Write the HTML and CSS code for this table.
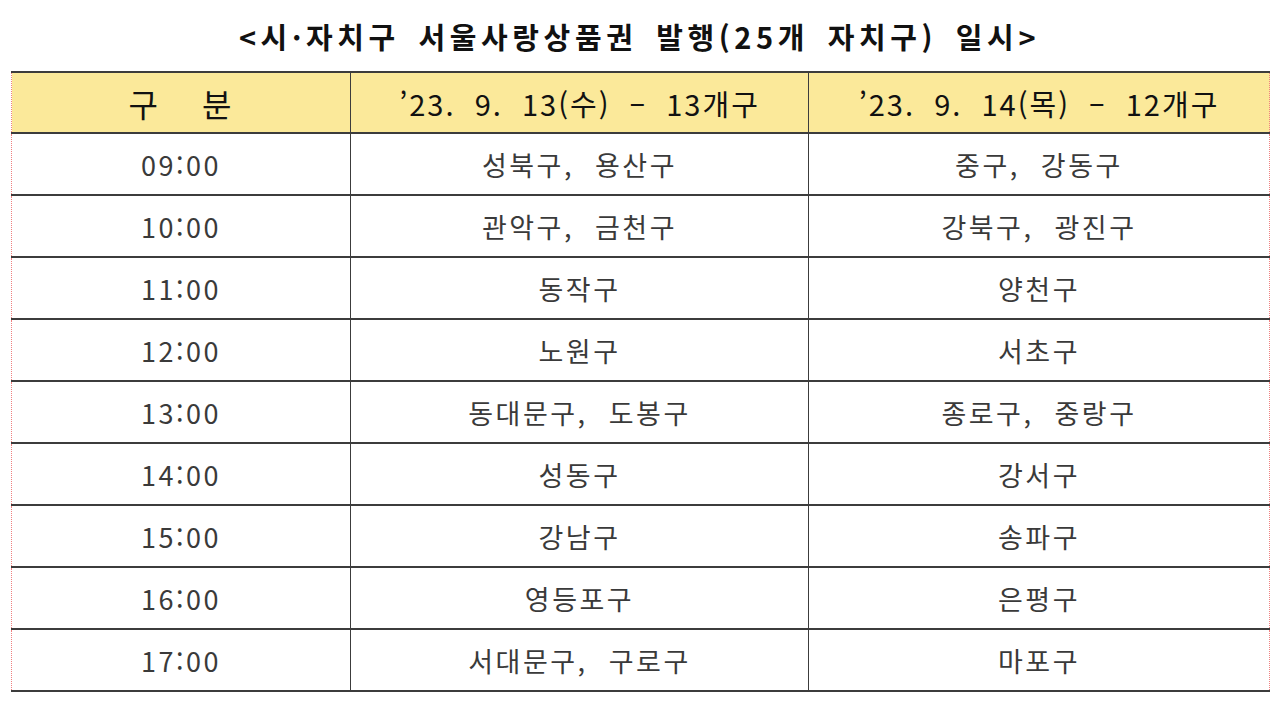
FILE: index.html
```html
<!DOCTYPE html>
<html lang="ko">
<head>
<meta charset="utf-8">
<link rel="stylesheet" href="styles.css">
</head>
<body>
<div class="page">
  <h1 class="title">&lt;시·자치구 서울사랑상품권 발행(25개 자치구) 일시&gt;</h1>
  <table class="sched">
    <colgroup>
      <col class="c1"><col class="c2"><col class="c3">
    </colgroup>
    <thead>
      <tr>
        <th class="gubun">구&nbsp;&nbsp;&nbsp;분</th>
        <th>’23. 9. 13(수) – 13개구</th>
        <th>’23. 9. 14(목) – 12개구</th>
      </tr>
    </thead>
    <tbody>
      <tr><td>09:00</td><td>성북구, 용산구</td><td>중구, 강동구</td></tr>
      <tr><td>10:00</td><td>관악구, 금천구</td><td>강북구, 광진구</td></tr>
      <tr><td>11:00</td><td>동작구</td><td>양천구</td></tr>
      <tr><td>12:00</td><td>노원구</td><td>서초구</td></tr>
      <tr><td>13:00</td><td>동대문구, 도봉구</td><td>종로구, 중랑구</td></tr>
      <tr><td>14:00</td><td>성동구</td><td>강서구</td></tr>
      <tr><td>15:00</td><td>강남구</td><td>송파구</td></tr>
      <tr><td>16:00</td><td>영등포구</td><td>은평구</td></tr>
      <tr><td>17:00</td><td>서대문구, 구로구</td><td>마포구</td></tr>
    </tbody>
  </table>
</div>
</body>
</html>
```
FILE: styles.css
```css
html, body {
  margin: 0;
  padding: 0;
  background: #ffffff;
}
.page {
  width: 1280px;
  height: 707px;
  padding: 14px 0 0 11px;
  box-sizing: border-box;
  font-family: "Noto Sans CJK KR", "Noto Sans", sans-serif;
}
.title {
  margin: 0;
  width: 1257px;
  text-align: center;
  font-size: 29px;
  line-height: 44px;
  font-weight: 700;
  color: #111;
  letter-spacing: 4.6px;
  word-spacing: 6px;
  height: 57px;
  box-sizing: border-box;
}
.sched {
  width: 1258px;
  border-collapse: collapse;
  table-layout: fixed;
}
.c1 { width: 339px; }
.c2 { width: 458px; }
.c3 { width: 461px; }
.sched th, .sched td {
  border-top: 2px solid #3c3c3c;
  border-bottom: 2px solid #3c3c3c;
  border-left: 1.5px solid #3c3c3c;
  border-right: 1.5px solid #3c3c3c;
  text-align: center;
  padding: 0;
  white-space: nowrap;
}
.sched tr > :first-child { border-left: 1px dotted #f08080; }
.sched tr > :last-child { border-right: 1px dotted #f08080; }
.sched th {
  background: #fbe99a;
  height: 59px;
  font-size: 29px;
  font-weight: 400;
  color: #111;
  letter-spacing: 2px;
  word-spacing: 9px;
}
.sched th.gubun {
  font-size: 32px;
  word-spacing: 3px;
}
.sched td {
  height: 60px;
  font-size: 27px;
  font-weight: 400;
  color: #3a3a3a;
  letter-spacing: 2.5px;
  word-spacing: 11px;
}
```
